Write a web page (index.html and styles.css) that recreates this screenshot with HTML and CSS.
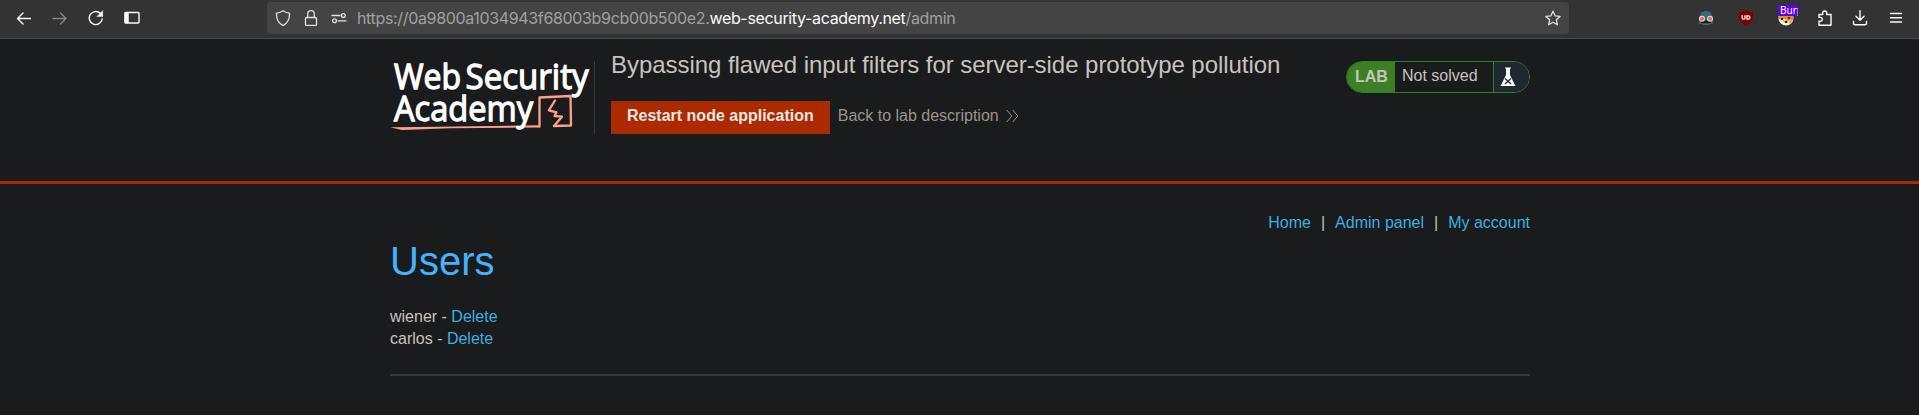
FILE: index.html
```html
<!DOCTYPE html>
<html lang="en">
<head>
<meta charset="utf-8">
<title>Bypassing flawed input filters for server-side prototype pollution</title>
<link rel="stylesheet" href="styles.css">
</head>
<body>
<div class="toolbar">
  <div class="nav-buttons">
    <svg class="ico" viewBox="0 0 16 16"><path d="M14.500 8.500H1.500M7 3 1.500 8.500 7 14"/></svg>
    <svg class="ico dim" viewBox="0 0 16 16"><path d="M1 8.500h13M8.500 3 14 8.500 8.500 14"/></svg>
    <svg class="ico" viewBox="0 0 16 16"><path d="M14.200 9A6.500 6.500 0 1 1 12.500 3.600"/><path class="fill" d="M14.700 1v5.500H9.200z"/></svg>
    <svg class="ico" viewBox="0 0 16 16"><rect x="1" y="2.500" width="14" height="10.500" rx="1"/><path class="fill" d="M1 2.500h3.500V13H1z"/></svg>
  </div>
  <div class="urlbar">
    <div class="url-icons">
      <svg class="ico soft" viewBox="0 0 16 16"><path d="M8 .700C10 2 12.500 3 14.500 3.200 14.700 9 13 13 8 15.500 3 13 1.300 9 1.500 3.200 3.500 3 6 2 8 .700z"/></svg>
      <svg class="ico soft" viewBox="0 0 16 16"><rect x="2.500" y="7.500" width="11" height="8" rx="1"/><path d="M4.700 7.500V4a3.300 3.300 0 0 1 6.600 0v3.500"/></svg>
      <svg class="ico soft" viewBox="0 0 16 16"><path d="M1 5.500h8M7 10.800h8"/><circle cx="12.300" cy="5.500" r="1.900"/><circle cx="3.500" cy="10.800" r="1.900"/></svg>
    </div>
    <span class="url">https://0a9800a1034943f68003b9cb00b500e2.<b>web-security-academy.net</b>/admin</span>
    <svg class="ico soft" viewBox="0 0 16 16"><path d="m8 1.200 2.100 4.600 5 .6-3.700 3.400 1 5L8 12.300l-4.400 2.500 1-5L.900 6.400l5-.6z"/></svg>
  </div>
  <div class="extensions">
    <svg class="ext wide" viewBox="0 0 16 16"><path fill="#326b7c" d="M1.500 7C2 3 4 1 8 1s6 2 6.500 6L15 14h-3l-1 1H5l-1-1H1z"/><path fill="#10191e" d="M3 10.500h10v2.700H3z"/><circle cx="4" cy="8.800" r="3" fill="#e7ddd9"/><circle cx="12" cy="8.800" r="3" fill="#e7ddd9"/><circle cx="4" cy="8.800" r="2" fill="#e8694f"/><circle cx="12" cy="8.800" r="2" fill="#e8694f"/></svg>
    <svg class="ext wide" viewBox="0 0 16 16"><path fill="#800000" d="M8 0C10 1.500 12.500 2 15 2v5c0 4-3 7-7 9-4-2-7-5-7-9V2c2.500 0 5-.500 7-2z"/><path stroke="#fff" stroke-width="1.300" fill="none" d="M4.200 5.200v2.500q0 1.500 1.400 1.500T7 7.700V5.200M9 5.800h1.200a1.700 1.700 0 0 1 0 3.400H9z"/></svg>
    <div class="fox">
      <svg class="ext" viewBox="0 0 16 16"><circle cx="8" cy="8" r="7.500" fill="#f0f0e8"/><path fill="#ed8c24" d="M.500 6h15l-1 5-3-1-2.500 3-3-1-1-2-4-1z"/><path fill="#342720" d="M3 8h2v2H3zM10 7h2v2h-2zM7 11h2v2H7z"/><path fill="#dd7416" d="m11 12 3-2-2 4z"/><path fill="#fff" d="M5 9h4l-2 2z"/></svg>
      <span class="badge">Burp</span>
    </div>
    <svg class="ico puzzle" viewBox="0 0 16 16"><path d="M2 15.300v-4.100h1.500a1.900 1.900 0 0 0 0-3.800H2V4.500h3.700V3a2 2 0 0 1 4 0v1.500H14v10.800z"/></svg>
    <svg class="ico" viewBox="0 0 16 16"><path d="M8 .700V10M4 6.300l4 4 4-4M1.500 11.500v1.700q0 1.500 1.500 1.500h10q1.500 0 1.500-1.500v-1.700"/></svg>
    <svg class="ico" viewBox="0 0 16 16"><path d="M2.500 3.500h11M2.500 7.700h11M2.500 12h11"/></svg>
  </div>
</div>

<header class="lab-header">
  <div class="container lab-row">
    <svg class="logo" viewBox="0 0 204 73">
      <g class="logo-text">
        <text x="4" y="28.300" textLength="67" lengthAdjust="spacingAndGlyphs">Web</text>
        <text x="75.500" y="28.300" textLength="123" lengthAdjust="spacingAndGlyphs">Security</text>
      </g>
      <path class="logo-line" d="M149.500 65.500V36.500L180.500 35l.500 29.500-17 .5"/>
      <path class="logo-brush" d="M0 66.300 28 66 150 64.300v2.200L60 67.300 12 69z"/>
      <path class="logo-line" d="m165 39.500-6.200 9.800 7.700 2-2 3.700 7.500.700-8 9.300"/>
      <text class="logo-text" x="4" y="60.300" textLength="139" lengthAdjust="spacingAndGlyphs">Academy</text>
    </svg>
    <div class="title-box">
      <h2>Bypassing flawed input filters for server-side prototype pollution</h2>
      <div class="actions">
        <a class="restart">Restart node application</a>
        <a class="back">Back to lab description<svg class="chev" viewBox="0 0 13 14"><path d="m.800 1 5 6-5 6M6.800 1l5 6-5 6"/></svg></a>
      </div>
    </div>
    <div class="status">
      <span class="lab">LAB</span>
      <span class="state">Not solved</span>
      <span class="flask"><svg viewBox="0 0 16 20"><path fill="#fff" d="M5 .500h6v1h-1V8l5.500 11H.500L6 8V1.500H5z"/><path class="cross" d="m5 11.500 6 5.500m0-5.500L5 17"/></svg></span>
    </div>
  </div>
</header>

<main class="container">
  <nav class="links"><a>Home</a><span>|</span><a>Admin panel</a><span>|</span><a>My account</a></nav>
  <h1>Users</h1>
  <div class="user">wiener - <a>Delete</a></div>
  <div class="user">carlos - <a>Delete</a></div>
  <hr>
</main>
</body>
</html>
```
FILE: styles.css
```css
* { box-sizing: border-box; }
body { margin: 0; height: 415px; overflow: hidden; background: #1a1b1c; color: #c8c3bc; font: 16px/22px "Liberation Sans", Arial, sans-serif; }
.toolbar { display: flex; align-items: flex-start; height: 39px; padding: 2px 15px 0 16px; background: #333; border-bottom: 1px solid #4a4c4d; }
.ico { display: block; flex: none; width: 16px; height: 16px; fill: none; stroke: #fbfbfe; stroke-width: 1.4; stroke-linecap: round; stroke-linejoin: round; }
.ico .fill { fill: #fbfbfe; stroke-width: .5; }
.ico.dim { stroke: #858585; }
.ico.soft { stroke: #e0e0e0; stroke-width: 1.3; }
.nav-buttons { display: flex; gap: 20px; width: 251px; padding-top: 8px; }
.urlbar { display: flex; align-items: center; width: 1302px; height: 32px; padding: 0 8px; background: #444; border-radius: 4px; }
.url-icons { display: flex; gap: 12px; width: 82px; }
.url { flex: 1; color: #a0a0a0; font: 16px/32px Inter, sans-serif; letter-spacing: -.34px; white-space: nowrap; }
.url b { color: #fbfbfe; font-weight: 400; }
.extensions { display: flex; flex: 1; justify-content: flex-end; gap: 20px; padding-top: 8px; }
.ext { display: block; flex: none; width: 16px; height: 16px; }
.ext.wide { margin-right: 4px; }
.extensions .puzzle { margin: 0 -1px 0 2px; }
.fox { position: relative; width: 16px; margin-right: 1px; }
.badge { position: absolute; top: -5px; left: 0; width: 20px; height: 11px; overflow: hidden; padding-left: 2px; background: #5f00e8; color: #fff; font: 10px/11px "Noto Sans", sans-serif; }
.container { width: 1140px; margin: 0 389px 0 390px; }
.lab-header { height: 145px; border-bottom: 3px solid #ab2a00; }
.lab-row { display: flex; padding-top: 22px; }
.logo { flex: none; width: 205px; height: 73px; border-right: 1px solid #36393b; }
.logo-text { fill: #fff; stroke: #fff; stroke-width: 1.3; font-family: "Open Sans", sans-serif; font-size: 35.5px; }
.logo-line { fill: none; stroke: #ffa08c; stroke-width: 2.3; stroke-linejoin: round; stroke-linecap: round; }
.logo-brush { fill: #ffa08c; }
.title-box { flex: 1; padding-left: 16px; }
h2 { margin: -9px 0 0; font-size: 24px; line-height: 26px; font-weight: 400; letter-spacing: -.045px; white-space: nowrap; }
.actions { display: flex; align-items: center; gap: 8px; margin-top: 23px; }
.restart { height: 33px; padding: 0 16px; background: #ab2a00; color: #e8e6e3; font-weight: 700; line-height: 29px; }
.back { display: flex; align-items: center; gap: 7px; height: 33px; padding-bottom: 4px; color: #9d9488; }
.chev { width: 13px; height: 14px; fill: none; stroke: #9d9488; }
.status { display: flex; width: 184px; height: 32px; border: 1px solid #2b7f2c; border-radius: 16px; overflow: hidden; }
.lab { width: 48px; padding-left: 8px; background: #3c7f25; font-weight: 700; line-height: 29px; }
.state { flex: 1; padding-left: 7px; line-height: 28px; }
.flask { display: flex; width: 36px; padding: 5px 0 0 6px; border-left: 1px solid #2b7f2c; background: #1d292e; }
.flask svg { width: 16px; height: 20px; }
.cross { fill: none; stroke: #1d292e; stroke-width: 1.3; }
a { color: #3daee0; }
.links { display: flex; justify-content: flex-end; gap: 10px; padding-top: 28px; }
h1 { margin: 4px 0 22px; color: #44b3ff; font-size: 40px; line-height: 46px; font-weight: 400; }
hr { height: 2px; margin: 24px 0 0; border: 0; background: #36393b; }
```
